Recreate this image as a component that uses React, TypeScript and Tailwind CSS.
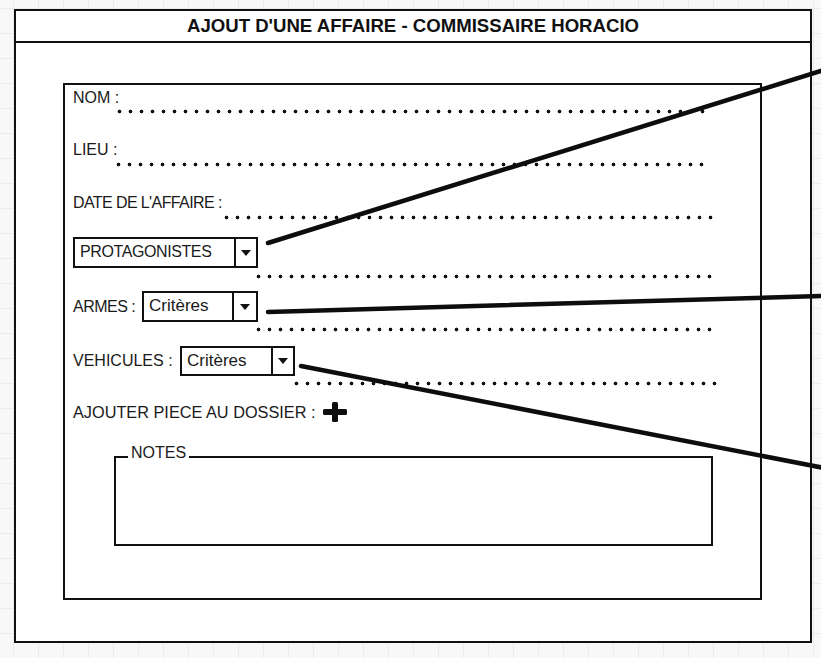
import React from "react";

const font = { fontFamily: '"Liberation Sans", Arial, sans-serif' };

function Dots({ className }: { className: string }) {
  return (
    <div
      className={
        "h-[5px] bg-[radial-gradient(circle,#111_1.6px,transparent_2.2px)] bg-[length:11px_5px] bg-repeat-x " +
        className
      }
    />
  );
}

function Select({
  value,
  width,
  arrow,
  size,
}: {
  value: string;
  width: string;
  arrow: string;
  size: string;
}) {
  return (
    <div className={"flex h-full border-2 border-[#111] bg-white " + width}>
      <div className={"flex-1 truncate pl-[5px] leading-[25px] text-[#1a1a1a] " + size}>{value}</div>
      <div className={"flex items-center justify-center border-l-2 border-[#111] " + arrow}>
        <svg width="10" height="6" viewBox="0 0 10 6">
          <path d="M0 0 L10 0 L5 6 Z" fill="#111" />
        </svg>
      </div>
    </div>
  );
}

function Callouts() {
  return (
    <svg className="pointer-events-none absolute inset-0" width="821" height="658">
      <g stroke="#0d0d0d" strokeWidth="4.5" strokeLinecap="round">
        <line x1="268" y1="243" x2="824" y2="70" />
        <line x1="268" y1="312" x2="824" y2="296" />
        <line x1="301" y1="366" x2="824" y2="468" />
      </g>
    </svg>
  );
}

export default function App() {
  return (
    <div
      className="relative h-[658px] w-[821px] overflow-hidden bg-[#f8f8f8] bg-[linear-gradient(to_right,#ececec_1px,transparent_1px),linear-gradient(to_bottom,#ececec_1px,transparent_1px)] bg-[length:25px_25px] bg-[position:13px_8px] pl-[14px] pt-[9px]"
      style={font}
    >
      <div className="w-[798px]">
        {/* title bar */}
        <div className="flex h-[34px] items-center justify-center border-2 border-[#111] bg-white">
          <span className="text-[18.6px] font-bold text-[#111]">
            AJOUT D'UNE AFFAIRE - COMMISSAIRE HORACIO
          </span>
        </div>

        {/* window body */}
        <div className="h-[600px] border-2 border-t-0 border-[#111] bg-white pl-[47px] pt-[40px]">
          <div className="h-[517px] w-[699px] border-2 border-[#111] pl-[8px] pt-[3px] text-[16px] leading-[20px] text-[#1a1a1a]">
            <div>NOM :</div>
            <Dots className="ml-[41px] mt-[1px] w-[594px]" />

            <div className="mt-[26px]">LIEU :</div>
            <Dots className="ml-[40px] mt-[2px] w-[594px]" />

            <div className="mt-[26px] tracking-[-0.6px]">DATE DE L'AFFAIRE :</div>
            <Dots className="ml-[148px] mt-[2px] w-[495px]" />

            <div className="mt-[17px] h-[31px]">
              <Select
                value="PROTAGONISTES"
                width="w-[185px]"
                arrow="w-[22px]"
                size="text-[16px] tracking-[-0.4px]"
              />
            </div>
            <Dots className="ml-[180px] mt-[6px] w-[462px]" />

            <div className="mt-[12px] flex h-[31px] items-center">
              <div className="w-[69px] tracking-[-0.5px]">ARMES :</div>
              <div className="h-full">
                <Select value="Critères" width="w-[116px]" arrow="w-[24px]" size="text-[17px]" />
              </div>
            </div>
            <Dots className="ml-[180px] mt-[5px] w-[462px]" />

            <div className="mt-[14px] flex h-[30px] items-center">
              <div className="w-[107px]">VEHICULES :</div>
              <div className="h-full">
                <Select value="Critères" width="w-[115px]" arrow="w-[22px]" size="text-[17px]" />
              </div>
            </div>
            <Dots className="ml-[218px] mt-[5px] w-[429px]" />

            <div className="mt-[16px] flex h-[20px] items-center gap-[8px] text-[16.3px]">
              <span>AJOUTER PIECE AU DOSSIER :</span>
              <svg width="24" height="20" viewBox="0 0 24 20">
                <rect x="9" y="0" width="6" height="20" rx="1.5" fill="#0d0d0d" />
                <rect x="0" y="7" width="24" height="6" rx="1.5" fill="#0d0d0d" />
              </svg>
            </div>

            <fieldset className="ml-[41px] mt-[21px] h-[103px] w-[599px] border-2 border-[#111]">
              <legend className="ml-[12px] px-[3px] pb-[8px] leading-[20px]">NOTES</legend>
            </fieldset>
          </div>
        </div>
      </div>
      <Callouts />
    </div>
  );
}
